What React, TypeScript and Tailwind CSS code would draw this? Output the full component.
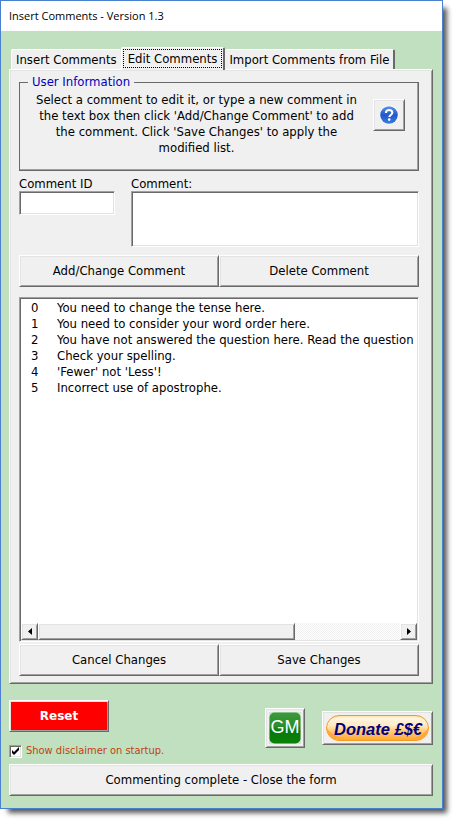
import { useState } from 'react'
import type { ReactNode } from 'react'
import clsx from 'clsx'

const TABS = ['Insert Comments', 'Edit Comments', 'Import Comments from File']

const COMMENTS = [
  'You need to change the tense here.',
  'You need to consider your word order here.',
  'You have not answered the question here. Read the question carefully.',
  'Check your spelling.',
  "'Fewer' not 'Less'!",
  'Incorrect use of apostrophe.',
]

const RAISED =
  'border border-t-white border-l-white border-r-[#696969] border-b-[#696969] shadow-[inset_1px_1px_0_#e3e3e3,inset_-1px_-1px_0_#a0a0a0]'

const SUNKEN =
  'border border-t-[#a0a0a0] border-l-[#a0a0a0] border-r-white border-b-white shadow-[inset_1px_1px_0_#696969,inset_-1px_-1px_0_#e3e3e3]'

type ButtonProps = {
  children: ReactNode
  className?: string
  label?: string
}

function Button({ children, className = 'h-8 bg-[#f0f0f0]', label }: ButtonProps) {
  return (
    <button
      type="button"
      aria-label={label}
      className={clsx('flex items-center justify-center', RAISED, className)}
    >
      {children}
    </button>
  )
}

function HelpIcon() {
  return (
    <svg viewBox="0 0 20 20" className="size-5" aria-hidden="true">
      <defs>
        <linearGradient id="help" x1="0" y1="0" x2="0" y2="1">
          <stop offset="0" stopColor="#5b93ea" />
          <stop offset="0.5" stopColor="#2058cc" />
          <stop offset="1" stopColor="#3f7be0" />
        </linearGradient>
      </defs>
      <circle cx="10" cy="10" r="9.5" fill="#fff" />
      <circle cx="10" cy="10" r="8.8" fill="url(#help)" />
      <path
        d="M6.9 8.1C6.9 6.2 8.2 5 10.1 5s3.2 1.1 3.2 2.8c0 2.2-3 2.2-3 4.2"
        fill="none"
        stroke="#fff"
        strokeWidth="2.1"
      />
      <circle cx="10.2" cy="14.6" r="1.3" fill="#fff" />
    </svg>
  )
}

function GmLogo() {
  return (
    <svg viewBox="0 0 32 32" className="size-8" aria-hidden="true">
      <defs>
        <linearGradient id="gm" x1="0" y1="0" x2="0" y2="1">
          <stop offset="0" stopColor="#3c9a3c" />
          <stop offset="0.45" stopColor="#2a8d2a" />
          <stop offset="0.6" stopColor="#067a06" />
          <stop offset="1" stopColor="#0a820a" />
        </linearGradient>
      </defs>
      <rect width="32" height="32" fill="#cfe6cf" />
      <rect x="0.5" y="0.5" width="31" height="31" rx="5" fill="url(#gm)" />
      <text
        x="16"
        y="21"
        textAnchor="middle"
        fontFamily="Liberation Sans, sans-serif"
        fontSize="18"
        fill="#fff"
      >
        GM
      </text>
    </svg>
  )
}

function DonateLogo() {
  return (
    <svg viewBox="0 0 105 28" className="h-7 w-[105px]" aria-hidden="true">
      <defs>
        <linearGradient id="donate" x1="0" y1="0" x2="0" y2="1">
          <stop offset="0" stopColor="#ffe2ab" />
          <stop offset="0.35" stopColor="#fff0cf" />
          <stop offset="0.6" stopColor="#ffcf80" />
          <stop offset="1" stopColor="#ffa630" />
        </linearGradient>
        <linearGradient id="donate-shine" x1="0" y1="0" x2="0" y2="1">
          <stop offset="0" stopColor="#fff8e8" />
          <stop offset="1" stopColor="#ffe3b0" />
        </linearGradient>
      </defs>
      <rect x="1" y="1.5" width="103" height="25.5" rx="12.7" fill="#fff" />
      <rect
        x="1.5"
        y="1.5"
        width="102"
        height="25"
        rx="12.5"
        fill="url(#donate)"
        stroke="#f59a23"
      />
      <path d="M3 14C3 7 8 3.500 14 3.500h77c6 0 11 3.500 11 10.500-2-3-6-4-10-4H13C8 10 5 11 3 14Z" fill="url(#donate-shine)" />
      <path d="M2 14c0 7 5 12 12 12h12C14 24 6 21 2 14ZM103 14c0 7-5 12-12 12H79c12-2 20-5 24-12Z" fill="#ffa93a" />
      <text
        x="53"
        y="21"
        textAnchor="middle"
        fontFamily="Liberation Sans, sans-serif"
        fontSize="16.5"
        fontWeight="bold"
        fontStyle="italic"
        fill="#000080"
      >
        Donate £$€
      </text>
    </svg>
  )
}

function Tabs() {
  const [active, setActive] = useState(1)

  return (
    <div role="tablist" className="flex items-end pl-0.5">
      {TABS.map((tab, i) => (
        <button
          key={tab}
          type="button"
          role="tab"
          aria-selected={i === active}
          onClick={() => setActive(i)}
          className={clsx(
            'rounded-t-xs border-t border-l border-t-white border-l-white bg-[#f0f0f0] whitespace-nowrap',
            i === active
              ? 'relative -mb-px border-r-2 border-r-[#696969] p-px pb-0.5'
              : 'h-5 px-1',
            i > active && 'border-r-2 border-r-[#696969] border-l-0'
          )}
        >
          {i === active ? (
            <span className="block border border-dotted border-black px-1 leading-[17px]">
              {tab}
            </span>
          ) : (
            tab
          )}
        </button>
      ))}
    </div>
  )
}

function ScrollBar() {
  return (
    <div className="flex h-[17px] bg-[repeating-conic-gradient(#ffffff_0_25%,#f0f0f0_0_50%)] bg-[length:2px_2px]">
      <Button label="Scroll left" className="w-[17px] bg-[#f0f0f0]">
        <svg viewBox="0 0 4 7" className="h-[7px] w-1" aria-hidden="true">
          <path d="M4 0v7L0 3.500Z" />
        </svg>
      </Button>
      <div className="flex flex-1">
        <div className={clsx('w-[71%] bg-[#f0f0f0]', RAISED)} />
      </div>
      <Button label="Scroll right" className="w-[17px] bg-[#f0f0f0]">
        <svg viewBox="0 0 4 7" className="h-[7px] w-1" aria-hidden="true">
          <path d="M0 0v7l4-3.500Z" />
        </svg>
      </Button>
    </div>
  )
}

function CommentList() {
  return (
    <div className={clsx('mt-2.5 flex min-h-40 flex-1 flex-col bg-white p-px', SUNKEN)}>
      <ul className="flex-1 overflow-hidden pt-px leading-4 whitespace-nowrap">
        {COMMENTS.map((comment, i) => (
          <li key={comment} className="flex">
            <span className="w-9 shrink-0 pl-2.5">{i}</span>
            <span>{comment}</span>
          </li>
        ))}
      </ul>
      <ScrollBar />
    </div>
  )
}

function EditPanel() {
  return (
    <div
      role="tabpanel"
      className={clsx('flex flex-1 flex-col bg-[#f0f0f0] pt-[5px] pr-[13px] pb-[7px] pl-[9px]', RAISED)}
    >
      <fieldset className="flex h-24 min-w-0 items-start border border-[#696969] pr-[13px] pl-3.5 shadow-[inset_-1px_-1px_0_#a0a0a0]">
        <legend className="-ml-1.5 px-1 leading-[14px] text-[#0000c0]">User Information</legend>
        <p className="min-w-0 flex-1 pt-[3px] text-center leading-4">
          Select a comment to edit it, or type a new comment in the text box then click
          'Add/Change Comment' to add the comment. Click 'Save Changes' to apply the modified
          list.
        </p>
        <Button label="Help" className="mt-2.5 ml-3.5 size-8 shrink-0 bg-[#f0f0f0]">
          <HelpIcon />
        </Button>
      </fieldset>

      <div className="mt-[5px] flex items-start gap-4">
        <label className="w-24 leading-[15px]">
          Comment ID
          <input type="text" className={clsx('block h-6 w-full bg-white px-1', SUNKEN)} />
        </label>
        <label className="min-w-0 flex-1 leading-[15px]">
          Comment:
          <textarea className={clsx('block h-14 w-full resize-none bg-white px-1', SUNKEN)} />
        </label>
      </div>

      <div className="mt-2 grid grid-cols-2">
        <Button>Add/Change Comment</Button>
        <Button>Delete Comment</Button>
      </div>

      <CommentList />

      <div className="mt-0.5 grid grid-cols-2">
        <Button>Cancel Changes</Button>
        <Button>Save Changes</Button>
      </div>
    </div>
  )
}

function Footer() {
  const [showDisclaimer, setShowDisclaimer] = useState(true)

  return (
    <footer className="mt-4">
      <div className="flex items-start">
        <div className="flex-1">
          <Button className="h-8 w-[100px] bg-[#ff0000] font-['DejaVu_Sans',sans-serif] text-xs font-bold text-white">
            Reset
          </Button>
          <label className="mt-3 flex items-center gap-1 text-[11px] leading-[14px] text-[#c04010]">
            <span className="grid">
              <input
                type="checkbox"
                checked={showDisclaimer}
                onChange={(e) => setShowDisclaimer(e.target.checked)}
                className={clsx('peer col-start-1 row-start-1 size-[13px] appearance-none bg-white', SUNKEN)}
              />
              <svg
                viewBox="0 0 13 13"
                className="pointer-events-none invisible col-start-1 row-start-1 size-[13px] peer-checked:visible"
                aria-hidden="true"
              >
                <path d="M3 5v3l2 2 5-5V2L5 7Z" />
              </svg>
            </span>
            Show disclaimer on startup.
          </label>
        </div>
        <div className="flex items-center gap-[17px] pt-2">
          <Button label="GM" className="size-10 bg-[#f0f0f0]">
            <GmLogo />
          </Button>
          <Button label="Donate £$€" className="h-[34px] w-[111px] bg-[#f0f0f0]">
            <DonateLogo />
          </Button>
        </div>
      </div>
      <Button className="mt-1.5 h-8 w-full bg-[#f0f0f0]">
        Commenting complete - Close the form
      </Button>
    </footer>
  )
}

export default function App() {
  return (
    <div className="flex min-h-screen bg-white pr-[15px] pb-[15px] font-['DejaVu_Sans_Condensed','DejaVu_Sans',sans-serif] text-[13px] text-black">
      <div className="flex min-w-0 flex-1 flex-col border border-[#4a80d0] bg-[#c0e0c0] shadow-[6px_6px_5px_-2px_#000000a8]">
        <header className="h-[30px] bg-white pl-2">
          <h1 className="font-['Open_Sans',sans-serif] text-[11px] leading-[30px]">
            Insert Comments - Version 1.3
          </h1>
        </header>
        <main className="flex flex-1 flex-col pt-4 pr-[9px] pb-3 pl-2">
          <Tabs />
          <EditPanel />
          <Footer />
        </main>
      </div>
    </div>
  )
}
